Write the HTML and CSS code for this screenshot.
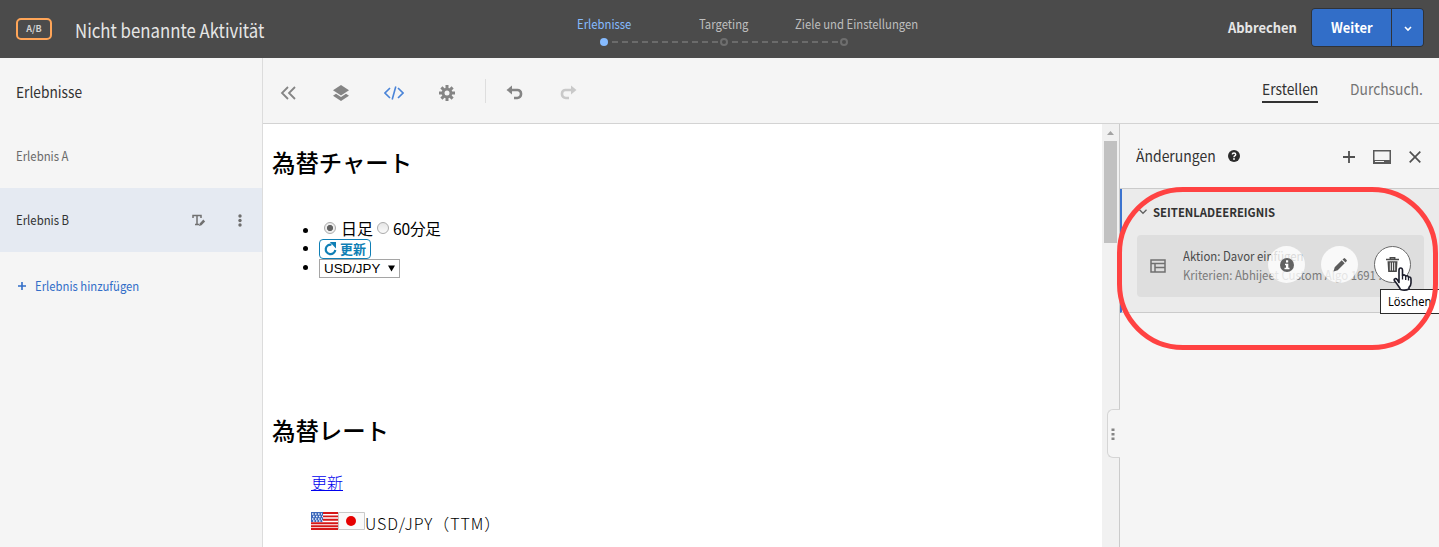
FILE: index.html
```html
<!DOCTYPE html>
<html lang="de">
<head>
<meta charset="utf-8">
<title>Nicht benannte Aktivität</title>
<link rel="stylesheet" href="styles.css">
</head>
<body>
<header class="topbar">
  <div class="ident"><span class="ab"><span>A/B</span></span><h1 class="title"><span>Nicht benannte Aktivität</span></h1></div>
  <div class="stepper">
    <div class="step-labels"><span class="step active"><span>Erlebnisse</span></span><span class="step second"><span>Targeting</span></span><span class="step third"><span>Ziele und Einstellungen</span></span></div>
    <svg class="track" width="250" height="10" viewBox="0 0 250 10">
      <path d="M12 5H118M132 5H238" stroke="#6b6b6b" stroke-width="2" stroke-dasharray="6 4"/>
      <circle cx="4" cy="5" r="4" fill="#86bbff"/>
      <circle cx="124" cy="5" r="3" fill="none" stroke="#6e6e6e" stroke-width="2"/>
      <circle cx="244" cy="5" r="3" fill="none" stroke="#6e6e6e" stroke-width="2"/>
    </svg>
  </div>
  <div class="actions">
    <span class="cancel"><span>Abbrechen</span></span>
    <div class="split"><button class="next"><span>Weiter</span></button><button class="more"><svg width="8" height="6" viewBox="0 0 8 6"><path d="M1 1l3 3 3-3" fill="none" stroke="#fff" stroke-width="1.6"/></svg></button></div>
  </div>
</header>
<div class="workspace">
  <aside class="sidebar">
    <h2 class="side-title"><span>Erlebnisse</span></h2>
    <div class="exp muted"><span>Erlebnis A</span></div>
    <div class="exp selected"><span>Erlebnis B</span>
      <svg class="text-edit" width="14" height="13" viewBox="0 0 14 13"><path d="M1 4V1.5h8V4M5 1.5v9M3 10.5h4" fill="none" stroke="#707070" stroke-width="1.5"/><path d="M7 12l.7-2.6 3.6-3.8 1.8 1.8-3.6 3.8z" fill="#707070"/></svg>
      <svg class="dots" width="4" height="13" viewBox="0 0 4 13" fill="#6e6e6e"><circle cx="2" cy="2" r="1.7"/><circle cx="2" cy="6.500" r="1.7"/><circle cx="2" cy="11" r="1.7"/></svg>
    </div>
    <div class="add"><svg width="8" height="8" viewBox="0 0 8 8"><path d="M4 0v8M0 4h8" stroke="#326ec8" stroke-width="1.6"/></svg><span>Erlebnis hinzufügen</span></div>
  </aside>
  <div class="main">
    <div class="toolbar">
      <svg class="ic" width="20" height="20" viewBox="0 0 20 20"><path d="M10 4L4 10l6 6M17 4l-6 6 6 6" fill="none" stroke="#858585" stroke-width="1.8"/></svg>
      <svg class="ic" width="20" height="20" viewBox="0 0 20 20" fill="#858585"><path d="M10 2l8 5.300-8 5.200-8-5.200z"/><path d="M2 12.800l3-2 5 3.300 5-3.300 3 2-8 5.200z"/></svg>
      <svg class="ic" width="20" height="20" viewBox="0 0 20 20"><path d="M6 5l-5 5 5 5M14 5l5 5-5 5M11.800 3.500l-3.600 13" fill="none" stroke="#4a84d8" stroke-width="1.600"/></svg>
      <svg class="ic" width="20" height="20" viewBox="0 0 20 20"><g stroke="#858585" stroke-width="3"><path d="M10 2v16M2 10h16M4.400 4.400l11.200 11.200M15.600 4.400L4.400 15.600"/></g><circle cx="10" cy="10" r="5.300" fill="#858585"/><circle cx="10" cy="10" r="2.500" fill="#f5f5f5"/></svg>
      <i class="rule"></i>
      <svg class="ic undo" width="20" height="20" viewBox="0 0 20 20"><path d="M5 7h7.500a3.500 3.500 0 0 1 3.500 3.500v.8a3.700 3.700 0 0 1-3.700 3.700H9" fill="none" stroke="#858585" stroke-width="2.600"/><path d="M1.500 7L7 2.500v9z" fill="#858585"/></svg>
      <svg class="ic redo" width="20" height="20" viewBox="0 0 20 20"><path d="M15 7H7.500A3.500 3.500 0 0 0 4 10.500v.8A3.700 3.700 0 0 0 7.700 15H11" fill="none" stroke="#c9c9c9" stroke-width="2.600"/><path d="M18.500 7L13 2.500v9z" fill="#c9c9c9"/></svg>
      <nav class="modes"><span class="mode on"><span>Erstellen</span></span><span class="mode browse"><span>Durchsuch.</span></span></nav>
    </div>
    <div class="body">
      <section class="page">
        <h2 class="jp-head"><span>為替チャート</span></h2>
        <ul class="list">
          <li class="periods"><i class="radio checked"></i><span class="p1">日足</span><i class="radio"></i><span class="p2">60分足</span></li>
          <li><span class="refresh"><svg width="13" height="14" viewBox="0 0 13 14"><path d="M7.500 2.700A4.800 4.800 0 1 0 11.300 8" fill="none" stroke="#107fb5" stroke-width="2.200"/><path d="M5.800 0H12v6.500z" fill="#107fb5"/></svg><b>更新</b></span></li>
          <li class="currency"><span class="select"><span>USD/JPY</span><svg width="7" height="7" viewBox="0 0 7 7"><path d="M0 .5h7L3.500 6.500z"/></svg></span></li>
        </ul>
        <h2 class="jp-head rates"><span>為替レート</span></h2>
        <div class="link"><a href="#">更新</a></div>
        <div class="pair">
          <svg width="27" height="18" viewBox="0 0 27 18"><path fill="#fff" d="M0 0h27v18H0z"/><path d="M0 1h27M0 4.400h27M0 7.800h27M0 11.200h27M0 14.200h27M0 17h27" stroke="#d51818" stroke-width="1.900"/><path fill="#3d68ba" d="M0 0h12v10H0z"/><path d="M1 2h10M2 4.500h10M1 7h10M2 9h10" stroke="#e8effc" stroke-width="1.300" stroke-dasharray="1.500 1.500"/></svg><svg width="27" height="18" viewBox="0 0 27 18"><path fill="#fafafa" stroke="#c9c9c9" d="M.5.5h26v17H.5z"/><circle cx="13" cy="9" r="5" fill="#e60000"/></svg><span class="pair-name">USD/JPY（TTM）</span>
        </div>
      </section>
      <div class="scroll"><svg width="7" height="4" viewBox="0 0 7 4"><path d="M0 4l3.500-4L7 4z" fill="#a3a3a3"/></svg><i class="thumb"></i>
        <span class="grip"><svg width="4" height="13" viewBox="0 0 4 13" fill="#858585"><path d="M.5.500h3v2.500h-3zM.5 5h3v2.500h-3zM.5 9.500h3V12h-3z"/></svg></span></div>
      <aside class="changes">
        <div class="changes-head"><span class="ch-title"><span>Änderungen</span></span>
          <svg class="help" width="12" height="12" viewBox="0 0 12 12"><circle cx="6" cy="6" r="6" fill="#2c2c2c"/><path d="M4.200 4.300Q4.400 3 6 3t1.700 1.400Q7.700 5.300 6.700 5.800 6 6.200 6 7.200" fill="none" stroke="#fff" stroke-width="1.400"/><circle cx="6" cy="9" r=".9" fill="#fff"/></svg>
          <svg class="plus" width="12" height="12" viewBox="0 0 12 12"><path d="M6 0v12M0 6h12" stroke="#505050" stroke-width="1.800"/></svg>
          <svg class="dock" width="18" height="14" viewBox="0 0 18 14"><path d="M.75.750h16.500v12.500H.75z" fill="none" stroke="#5a5a5a" stroke-width="1.500"/><path fill="#5a5a5a" d="M1 10h16v3H1z"/><path fill="#f5f5f5" d="M2 11h9v1H2z"/></svg>
          <svg class="close" width="12" height="12" viewBox="0 0 12 12"><path d="M.7.700l10.600 10.600M11.300.700L.7 11.300" stroke="#505050" stroke-width="1.700"/></svg>
        </div>
        <div class="event">
          <div class="event-head"><svg width="8" height="6" viewBox="0 0 8 6"><path d="M.5.800L4 4.300 7.500.800" fill="none" stroke="#606060" stroke-width="1.300"/></svg><b>SEITENLADEEREIGNIS</b></div>
          <div class="card">
            <svg class="card-ic" width="16" height="14" viewBox="0 0 16 14"><path d="M1 1h14v12H1zM1 4.500h14M5 4.500V13M5 8.500h10" fill="none" stroke="#707070" stroke-width="1.500"/></svg>
            <div class="card-text"><div class="line1"><span>Aktion: Davor einfügen</span></div><div class="line2"><span>Kriterien: Abhijeet Custom Algo 1691 ...</span></div></div>
            <div class="tools">
              <span class="round"><svg width="14" height="14" viewBox="0 0 14 14"><circle cx="7" cy="7" r="7" fill="#626262"/><path fill="#fff" d="M6 2.300h2.200v2.200H6zM5 5.700h3.300v4h1.200v1.500h-5V9.700H6V7.200H5z"/></svg></span>
              <span class="round"><svg width="14" height="14" viewBox="0 0 14 14" fill="#5c5c5c"><path d="M.5 13.500l1.200-4.200 7-7 3 3-7 7zM9.500 1.500L10.700.400q.7-.6 1.400 0l1.500 1.500q.6.700 0 1.400l-1.100 1.200z"/></svg></span>
              <span class="round hot"><svg width="13" height="15" viewBox="0 0 13 15"><path d="M0 2.500h13M4.300 2V.8h4.400V2" fill="none" stroke="#494949" stroke-width="1.500"/><path fill="#494949" d="M1.500 4.200h10l-.7 10.800H2.200z"/><path d="M4.300 5.500v8M6.500 5.500v8M8.700 5.500v8" stroke="#fff" stroke-width=".9"/></svg></span>
            </div>
          </div>
        </div>
      </aside>
    </div>
  </div>
</div>
<div class="tooltip"><span>Löschen</span></div>
<svg class="cursor" width="19" height="24" viewBox="0 0 19 24"><path d="M6 15.500V3.200Q6 1 7.700 1T9.500 3.200V8.500Q11.700 7 12.700 9.200 14.700 8 15.500 10.200 18 9.500 18 12.300V16q0 2.500-2 4.300V22q-4 2-8.500.500Q6.500 20.500 4 17L1.500 13.800Q.700 12.300 2 11.800q1.200-.5 2.300.9z" fill="#fff" stroke="#1c1d2b" stroke-width="1.600" stroke-linejoin="round"/><path d="M9.500 8.500v4M12.700 9.500v3.500M15.500 10.500v3" stroke="#1c1d2b" stroke-width="1.300"/></svg>
<div class="callout"></div>
</body>
</html>
```
FILE: styles.css
```css
* { box-sizing: border-box; }
body { margin: 0; width: 1439px; height: 547px; overflow: hidden; position: relative; background: #f5f5f5; color: #323232; font: 13px/20px "Noto Sans CJK JP", "Open Sans", sans-serif; display: flex; flex-direction: column; white-space: nowrap; }
h1, h2, ul { margin: 0; padding: 0; font-weight: 400; }
svg { display: block; flex: none; }
button { border: 0; padding: 0; font: inherit; }

/* Condensed UI lettering */
.title span, .step span, .cancel span, .next span, .side-title span, .exp span, .add span, .mode span, .ch-title span, .event-head b, .card-text span, .tooltip span { display: inline-block; transform-origin: 0 50%; transform: scaleX(.87); }
.title span { transform: scaleX(.883); }
.cancel span, .next span, .mode span { transform: scaleX(.923); }
.side-title span { transform: scaleX(.915); }
.exp span { transform: scaleX(.875); }
.ch-title span { transform: scaleX(.93); }
.event-head b { transform: scaleX(.945); }
.card-text span { transform: scaleX(.912); }
.tooltip span { transform: scaleX(.93); }

.topbar { height: 58px; background: #4b4b4b; display: flex; flex: none; }
.ident { width: 577px; display: flex; align-items: center; padding: 2px 0 0 16px; }
.ab { width: 36px; height: 22px; margin-top: -2px; border: 2px solid #ffa558; border-radius: 5px; color: #d2d2d2; font-size: 9px; line-height: 17px; font-weight: 700; text-align: center; }
.title { margin-left: 23px; font-size: 19px; line-height: 28px; color: #e6e6e6; }
.stepper { width: 400px; padding-top: 14px; color: #bebebe; }
.step-labels { display: flex; }
.step { width: 122px; }
.step.second { width: 96px; }
.step.active { color: #86bbff; }
.track { margin: 3px 0 0 23px; }
.actions { flex: 1; display: flex; justify-content: flex-end; padding: 8px 15px 0 0; }
.cancel { width: 83px; line-height: 39px; color: #e6e6e6; font-size: 14px; font-weight: 700; }
.split { display: flex; gap: 1px; height: 39px; border: 1px solid #303338; border-radius: 4px; overflow: hidden; background: #303338; }
.next, .more { background: #326ec8; color: #fff; font-weight: 700; font-size: 14px; }
.next { width: 79px; padding: 0 0 2px 19px; text-align: left; }
.more { width: 31px; padding: 2px 0 0 12px; }

.workspace { flex: 1; display: flex; min-height: 0; }
.sidebar { width: 263px; border-right: 1px solid #dcdcdc; }
.side-title { height: 66px; padding: 24px 16px 0; font-size: 15px; }
.exp { height: 64px; padding: 0 20px 0 16px; display: flex; align-items: center; }
.exp.muted { color: #6a6a6a; }
.exp.selected { background: #e5eaf2; }
.text-edit { margin-left: auto; }
.dots { margin-left: 32px; }
.add { display: flex; align-items: center; gap: 9px; padding: 24px 0 0 18px; color: #326ec8; }

.main { flex: 1; display: flex; flex-direction: column; min-width: 0; }
.toolbar { height: 66px; flex: none; border-bottom: 1px solid #d3d3d3; display: flex; align-items: center; gap: 33px; padding: 4px 17px 0 15px; }
.rule { width: 1px; height: 24px; background: #dedede; margin: -3px -4px 0 -5px; }
.undo { margin-left: -10px; }
.modes { margin-left: auto; display: flex; gap: 32px; font-size: 15px; align-self: flex-start; padding-top: 17px; }
.mode { height: 24px; line-height: 20px; color: #747474; }
.mode.on { width: 56px; color: #323232; border-bottom: 2px solid #323232; }
.browse { width: 72px; }

.body { flex: 1; display: flex; min-height: 0; }
.page { width: 839px; background: #fff; color: #000; padding: 24px 9px 0; overflow: hidden; }
.jp-head { font-size: 23.4px; line-height: 28px; font-weight: 500; }
.list { margin: 43px 0 0 47px; list-style: none; font-size: 16px; }
.list li { height: 20px; display: flex; align-items: center; }
.list li::before { content: ""; width: 5px; height: 5px; border-radius: 50%; background: #000; margin: -1px 11px 0 -16px; }
.list .periods::before { margin-top: 2px; }
.list .currency { height: 18px; }
.p1, .p2 { padding-bottom: 2px; }
.p2 { font-size: 15.6px; margin-left: -1px; letter-spacing: -.2px; }
.radio { width: 12px; height: 12px; border-radius: 50%; border: 1px solid #ababab; background: linear-gradient(#e6e6e6, #fafafa); margin: -2px 5px 0 5px; }
.radio.checked { background: radial-gradient(circle, #626262 0 2.700px, #eee 3.500px); }
.p1 { margin-right: -1px; }
.refresh { width: 52px; height: 20px; border: 1px solid #107fb5; border-radius: 4px; display: flex; align-items: center; gap: 3px; padding-left: 4px; color: #107fb5; font-size: 13px; line-height: 18px; }
.select { width: 81px; height: 19px; flex: none; border: 1px solid #a5a5a5; display: flex; align-items: center; gap: 8px; padding-left: 4px; font: 13.330px/17px "Liberation Sans", sans-serif; }
.rates { margin-top: 139px; }
.link { padding: 27px 0 0 39px; font-size: 16px; line-height: 22px; font-weight: 300; }
.link a { color: #0000ee; }
.pair { display: flex; padding: 19px 0 0 39px; font-size: 16px; line-height: 22px; font-weight: 300; }
.pair-name { letter-spacing: .950px; }

.scroll { position: relative; width: 18px; background: #f1f1f1; border-right: 1px solid #cbcbcb; padding: 7px 2px 0 2px; display: flex; flex-direction: column; }
.scroll > svg { margin-left: 3px; }
.thumb { height: 102px; width: 13px; background: #c1c1c1; margin-top: 6px; }
.grip { position: absolute; left: 5px; top: 285px; width: 13px; height: 49px; background: #f5f5f5; border: 1px solid #d5d5d5; border-right: 0; border-radius: 6px 0 0 6px; padding: 18px 0 0 3px; }
.changes { width: 319px; background: #f5f5f5; }
.changes-head { height: 65px; border-bottom: 1px solid #cbcbcb; display: flex; align-items: center; padding-left: 16px; }
.ch-title { width: 92px; font-size: 15px; }
.plus { margin-left: 103px; margin-top: 2px; }
.dock { margin: 2px 0 0 18px; }
.close { margin: 2px 0 0 18px; }
.event { height: 124px; background: #ebebeb; border-left: 2px solid #3b73cf; border-bottom: 1px solid #cbcbcb; padding: 13px 15px 0; }
.event-head { display: flex; align-items: center; gap: 6px; padding-left: 2px; font-size: 12px; }
.card { position: relative; height: 62px; margin-top: 13px; background: #dedede; border-radius: 4px; display: flex; align-items: center; padding-left: 13px; }
.card-text { margin: -2px 0 0 17px; line-height: 19px; color: #4a4a4a; font-size: 12.500px; }
.line2 { color: #7a7a7a; }
.tools { position: absolute; left: 131px; top: 11px; display: flex; gap: 16px; }
.round { width: 37px; height: 37px; border-radius: 50%; background: rgba(255,255,255,.800); display: flex; align-items: center; justify-content: center; }
.hot { background: #fff; border: 1px solid #6a6a6a; }
.tooltip { position: absolute; left: 1380px; top: 289px; width: 66px; height: 25px; background: #fff; border: 1px solid #2b2b2b; padding-left: 7px; font: 12px/23px "Noto Sans", sans-serif; color: #000; }
.cursor { position: absolute; left: 1393px; top: 267px; }
.callout { position: absolute; left: 1117px; top: 187px; width: 321px; height: 163px; border: 5px solid #ff4242; border-radius: 66px; }
```
